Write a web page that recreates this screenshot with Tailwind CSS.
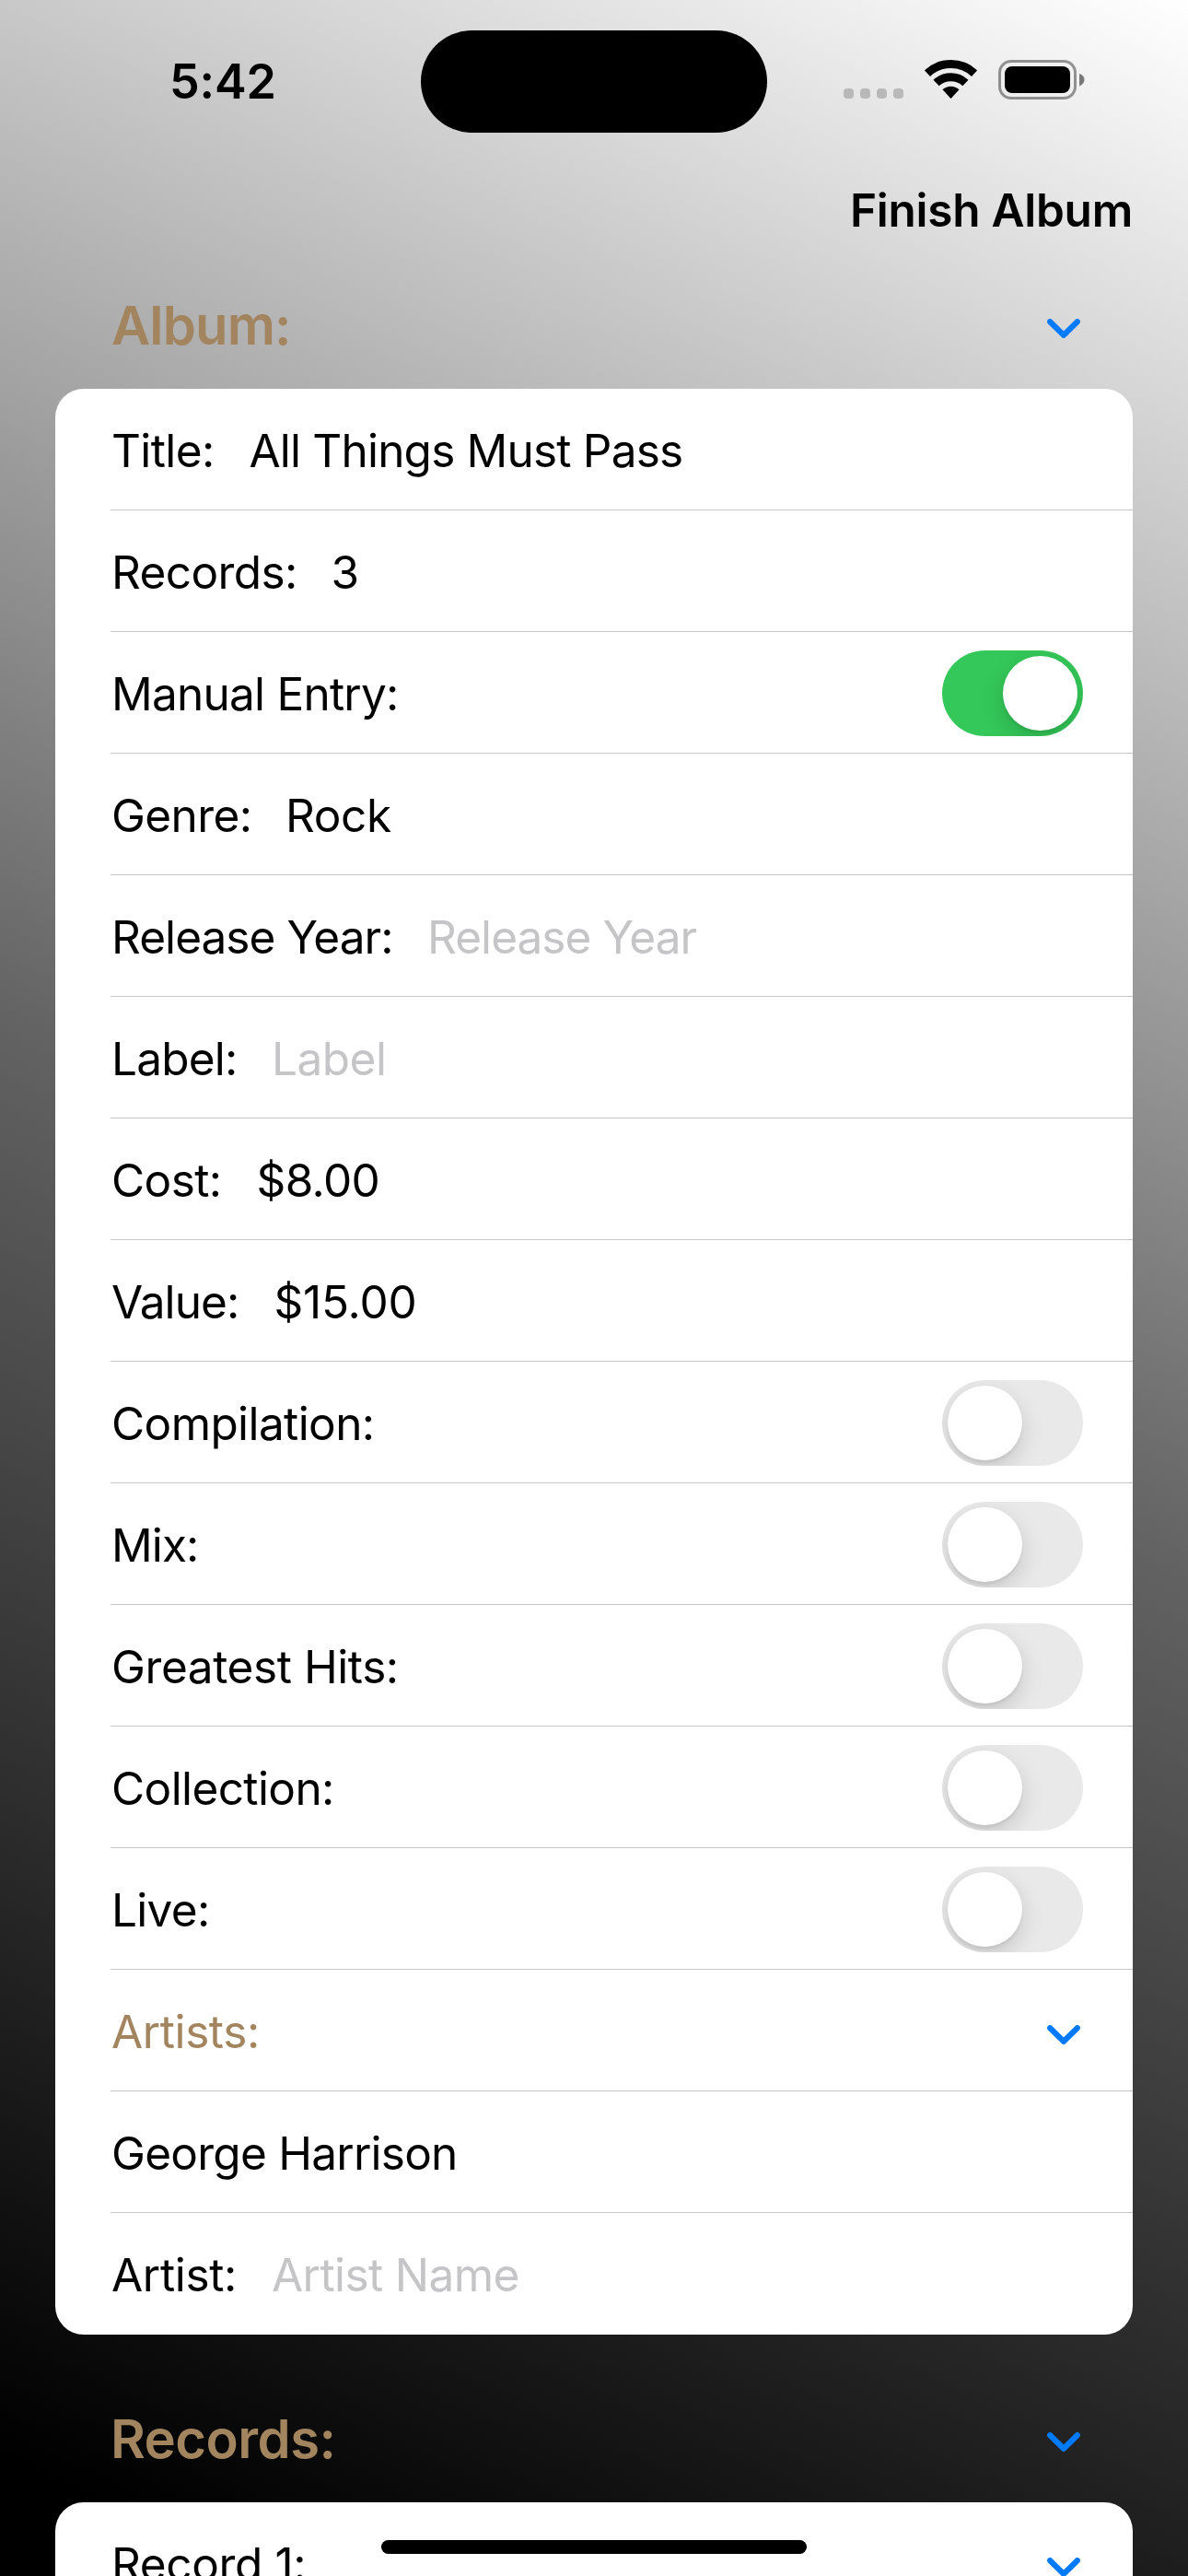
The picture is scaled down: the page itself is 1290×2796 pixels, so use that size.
<!DOCTYPE html>
<html lang="en">
<head>
<meta charset="utf-8">
<title>Finish Album</title>
<script src="https://cdn.jsdelivr.net/npm/@tailwindcss/browser@4"></script>
</head>
<body class="font-[Inter,sans-serif] text-black">
<svg class="hidden">
  <symbol id="chevron" viewBox="0 0 36 21"><path d="M3.2 3.2 18 17.8 32.8 3.2" fill="none" stroke="#007aff" stroke-width="6.2" stroke-linecap="round" stroke-linejoin="round"/></symbol>
</svg>
<div class="relative flex h-[2796px] w-[1290px] flex-col overflow-hidden bg-[linear-gradient(204.77deg,#ffffff_0%,#636363_50%,#000000_96%)]">

  <!-- Status bar -->
  <header class="flex h-[177px] shrink-0 items-center justify-between pr-[112px] pl-[184px]">
    <span class="text-[52px] leading-none font-semibold tracking-[-0.14px]">5:42</span>
    <div class="mb-[4px] flex items-start">
      <div class="mt-[31px] mr-[24px] flex gap-[7px]">
        <i class="h-[11px] w-[11px] rounded-[4px] bg-black/20"></i>
        <i class="h-[11px] w-[11px] rounded-[4px] bg-black/20"></i>
        <i class="h-[11px] w-[11px] rounded-[4px] bg-black/20"></i>
        <i class="h-[11px] w-[11px] rounded-[4px] bg-black/20"></i>
      </div>
      <svg class="-ml-px mr-[23px] h-[42px] w-[57px]" viewBox="0 0 57 42">
        <g fill="none" stroke="#000" stroke-width="9">
          <path d="M2.9 14.6A37.5 37.5 0 0 1 54.1 14.6"/>
          <path d="M12.6 25A23.3 23.3 0 0 1 44.4 25"/>
        </g>
        <path d="M28.5 42 19.5 32.3A13.2 13.2 0 0 1 37.5 32.3Z"/>
      </svg>
      <svg class="h-[43px] w-[94px]" viewBox="0 0 94 43">
        <rect x="1.5" y="1.5" width="82" height="40" rx="12.5" fill="none" stroke="#000" stroke-opacity=".4" stroke-width="3"/>
        <rect x="7" y="7" width="71" height="29" rx="8"/>
        <path d="M88 15C91.500 16 93.500 18.500 93.500 21.500S91.500 27 88 28.500Z" fill-opacity=".5"/>
      </svg>
    </div>
  </header>
  <div class="absolute top-[33px] left-[457px] h-[111px] w-[376px] rounded-full bg-black"></div>

  <!-- Navigation bar -->
  <nav class="flex h-[102px] shrink-0 items-center justify-end pt-px pr-[60px]">
    <button class="text-[49.5px] leading-none font-semibold tracking-[-0.25px]">Finish Album</button>
  </nav>

  <div class="flex h-[143px] shrink-0 items-center justify-between pt-[5px] pr-[117px] pl-[121px]">
    <h2 class="text-[58px] leading-none font-semibold tracking-[-0.86px] text-[#a2845e]">Album:</h2>
    <svg class="mt-[7px] h-[21px] w-[36px]"><use href="#chevron"/></svg>
  </div>

  <!-- Album form -->
  <section class="mx-[60px] shrink-0 rounded-[31px] bg-white pl-[60px] text-[49.5px] leading-none whitespace-nowrap">
    <div class="flex h-[132px] items-center border-b border-[#c6c6c8] pt-[4px] pl-px"><span class="w-[149.5px] tracking-[-0.6px]">Title:</span><span class="tracking-[-0.8px]">All Things Must Pass</span></div>
    <div class="flex h-[132px] items-center border-b border-[#c6c6c8] pt-[4px] pl-px"><span class="w-[238.5px] tracking-[-0.6px]">Records:</span><span>3</span></div>
    <div class="flex h-[132px] items-center justify-between border-b border-[#c6c6c8] pt-px pr-[54px] pl-px"><span class="pt-[3px] tracking-[-0.76px]">Manual Entry:</span>
      <div class="flex h-[93px] w-[153px] justify-end overflow-hidden rounded-full bg-[#34c759] p-[6px]"><div class="size-[81px] rounded-full bg-white shadow-[0_9px_24px_rgba(0,0,0,0.15),0_3px_3px_rgba(0,0,0,0.06)]"></div></div></div>
    <div class="flex h-[132px] items-center border-b border-[#c6c6c8] pt-[4px] pl-px"><span class="w-[189px] tracking-[-0.6px]">Genre:</span><span class="tracking-[-0.36px]">Rock</span></div>
    <div class="flex h-[132px] items-center border-b border-[#c6c6c8] pt-[4px] pl-px"><span class="w-[343px] tracking-[-0.95px]">Release Year:</span><span class="tracking-[-0.95px] text-[#c5c5c7]">Release Year</span></div>
    <div class="flex h-[132px] items-center border-b border-[#c6c6c8] pt-[4px] pl-px"><span class="w-[174px] tracking-[-0.8px]">Label:</span><span class="tracking-[-0.5px] text-[#c5c5c7]">Label</span></div>
    <div class="flex h-[132px] items-center border-b border-[#c6c6c8] pt-[4px] pl-px"><span class="w-[157.5px] tracking-[-0.6px]">Cost:</span><span class="tracking-[-0.63px]">$8.00</span></div>
    <div class="flex h-[132px] items-center border-b border-[#c6c6c8] pt-[4px] pl-px"><span class="w-[176.500px] tracking-[-0.91px]">Value:</span><span class="tracking-[-0.18px]">$15.00</span></div>
    <div class="flex h-[132px] items-center justify-between border-b border-[#c6c6c8] pt-px pr-[54px] pl-px"><span class="pt-[3px] tracking-[-0.6px]">Compilation:</span>
      <div class="flex h-[93px] w-[153px] overflow-hidden rounded-full bg-[#e9e9ea] p-[6px]"><div class="size-[81px] rounded-full bg-white shadow-[0_9px_24px_rgba(0,0,0,0.15),0_3px_3px_rgba(0,0,0,0.06)]"></div></div></div>
    <div class="flex h-[132px] items-center justify-between border-b border-[#c6c6c8] pt-px pr-[54px] pl-px"><span class="pt-[3px] tracking-[-0.9px]">Mix:</span>
      <div class="flex h-[93px] w-[153px] overflow-hidden rounded-full bg-[#e9e9ea] p-[6px]"><div class="size-[81px] rounded-full bg-white shadow-[0_9px_24px_rgba(0,0,0,0.15),0_3px_3px_rgba(0,0,0,0.06)]"></div></div></div>
    <div class="flex h-[132px] items-center justify-between border-b border-[#c6c6c8] pt-px pr-[54px] pl-px"><span class="pt-[3px] tracking-[-0.42px]">Greatest Hits:</span>
      <div class="flex h-[93px] w-[153px] overflow-hidden rounded-full bg-[#e9e9ea] p-[6px]"><div class="size-[81px] rounded-full bg-white shadow-[0_9px_24px_rgba(0,0,0,0.15),0_3px_3px_rgba(0,0,0,0.06)]"></div></div></div>
    <div class="flex h-[132px] items-center justify-between border-b border-[#c6c6c8] pt-px pr-[54px] pl-px"><span class="pt-[3px] tracking-[-0.6px]">Collection:</span>
      <div class="flex h-[93px] w-[153px] overflow-hidden rounded-full bg-[#e9e9ea] p-[6px]"><div class="size-[81px] rounded-full bg-white shadow-[0_9px_24px_rgba(0,0,0,0.15),0_3px_3px_rgba(0,0,0,0.06)]"></div></div></div>
    <div class="flex h-[132px] items-center justify-between border-b border-[#c6c6c8] pt-px pr-[54px] pl-px"><span class="pt-[3px] tracking-[-0.7px]">Live:</span>
      <div class="flex h-[93px] w-[153px] overflow-hidden rounded-full bg-[#e9e9ea] p-[6px]"><div class="size-[81px] rounded-full bg-white shadow-[0_9px_24px_rgba(0,0,0,0.15),0_3px_3px_rgba(0,0,0,0.06)]"></div></div></div>
    <div class="flex h-[132px] items-center justify-between border-b border-[#c6c6c8] pt-[4px] pr-[57px] pl-px"><span class="tracking-[-0.4px] text-[#a2845e]">Artists:</span><svg class="mt-[5px] h-[21px] w-[36px]"><use href="#chevron"/></svg></div>
    <div class="flex h-[132px] items-center border-b border-[#c6c6c8] pt-[4px] pl-px"><span class="tracking-[-0.75px]">George Harrison</span></div>
    <div class="flex h-[132px] items-center pt-[3px] pl-px"><span class="w-[174px] tracking-[-0.34px]">Artist:</span><span class="tracking-[-0.59px] text-[#c5c5c7]">Artist Name</span></div>
  </section>

  <div class="flex h-[182px] shrink-0 items-center justify-between pt-[43px] pr-[117px] pl-[120px]">
    <h2 class="text-[58px] leading-none font-semibold tracking-[-0.55px] text-[#a2845e]">Records:</h2>
    <svg class="mt-[8px] h-[21px] w-[36px]"><use href="#chevron"/></svg>
  </div>

  <!-- Records list, continues below the fold -->
  <section class="mx-[60px] shrink-0 rounded-t-[31px] bg-white pl-[60px] text-[49.5px] leading-none">
    <div class="flex h-[132px] items-center justify-between pt-[3px] pr-[57px] pl-px"><span class="tracking-[-0.35px]">Record 1:</span><svg class="mt-[5px] h-[21px] w-[36px]"><use href="#chevron"/></svg></div>
  </section>

  <!-- Home indicator -->
  <div class="absolute top-[2757px] left-[414px] h-[15px] w-[462px] rounded-full bg-black"></div>
</div>
</body>
</html>
